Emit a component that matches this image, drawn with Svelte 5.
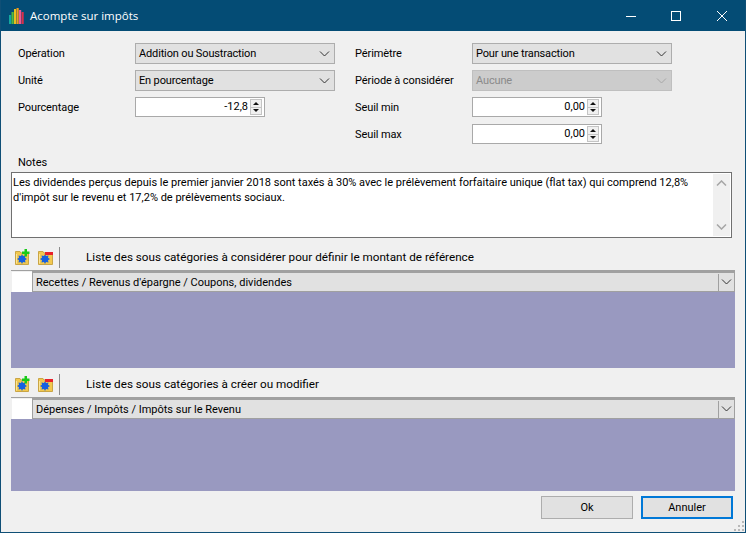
<script>
  const bars = [
    { x: 0, y: 7, h: 9, c: '#12a8a0' },
    { x: 2.5, y: 4, h: 12, c: '#55b83a' },
    { x: 5, y: 1, h: 15, c: '#e8c020' },
    { x: 7.5, y: 0, h: 16, c: '#f09a1c' },
    { x: 10, y: 2, h: 14, c: '#e85a9a' },
    { x: 12.5, y: 4, h: 12, c: '#d9304a' }
  ];

  const sections = [
    { label: 'Liste des sous catégories à considérer pour définir le montant de référence', value: "Recettes / Revenus d'épargne / Coupons, dividendes", grid: 'tall' },
    { label: 'Liste des sous catégories à créer ou modifier', value: 'Dépenses / Impôts / Impôts sur le Revenu', grid: 'short' }
  ];
</script>

{#snippet chevron()}
  <svg class="chevron" width="11" height="6" viewBox="0 0 11 6"><path d="M1 0.5 L5.5 5 L10 0.5" fill="none" stroke="currentColor" stroke-width="1" /></svg>
{/snippet}

{#snippet combo(text, disabled = false)}
  <div class="combo" class:disabled>
    <span>{text}</span>
    {@render chevron()}
  </div>
{/snippet}

{#snippet spin(text)}
  <div class="spin">
    <span class="spin-value">{text}</span>
    <div class="spin-btns">
      <div class="spin-btn"><svg width="6" height="3" viewBox="0 0 6 3"><path d="M3 0 L6 3 H0 Z" fill="#111" /></svg></div>
      <div class="spin-btn"><svg width="6" height="3" viewBox="0 0 6 3"><path d="M0 0 H6 L3 3 Z" fill="#111" /></svg></div>
    </div>
  </div>
{/snippet}

{#snippet folder(kind)}
  <svg width="17" height="17" viewBox="0 0 17 17">
    {#if kind === 'add'}
      <path d="M1.500 2.500 H6 L7 4 H14.500 V15.500 H1.500 Z" fill="#f2c84f" stroke="#c9a545" stroke-width="1" />
      <path d="M2.500 5 V14.500" stroke="#fbe59a" stroke-width="1" />
      <path d="M8 5 L9 7 L11.500 6.500 L11 8.800 L13 10 L11 11.200 L11.500 13.500 L9 13 L8 15 L7 13 L4.500 13.500 L5 11.200 L3 10 L5 8.800 L4.500 6.500 L7 7 Z" fill="#1560e0" />
      <path d="M8 2.500 H10.500 V0 H13 V2.500 H15.500 V5 H13 V7.500 H10.500 V5 H8 Z" fill="#18c918" />
    {:else}
      <path d="M2.500 2.500 H7 L8 4 H16.500 V15.500 H2.500 Z" fill="#f2c84f" stroke="#c9a545" stroke-width="1" />
      <path d="M3.500 5 V14.500" stroke="#fbe59a" stroke-width="1" />
      <path d="M9 5 L10 7 L12.500 6.500 L12 8.800 L14 10 L12 11.200 L12.500 13.500 L10 13 L9 15 L8 13 L5.500 13.500 L6 11.200 L4 10 L6 8.800 L5.500 6.500 L8 7 Z" fill="#1560e0" />
      <rect x="9" y="3" width="8" height="3" fill="#e8202a" />
    {/if}
  </svg>
{/snippet}

<div class="window">
  <header class="titlebar">
    <svg class="app-icon" width="16" height="16" viewBox="0 0 16 16">
      {#each bars as b}
        <rect x={b.x} y={b.y} width="2.2" height={b.h} fill={b.c} />
      {/each}
    </svg>
    <span class="title">Acompte sur impôts</span>
    <div class="controls">
      <div class="ctl"><svg class="min" width="10" height="10" viewBox="0 0 10 10"><path d="M0 5.500 H10" stroke="#fff" /></svg></div>
      <div class="ctl"><svg width="10" height="10" viewBox="0 0 10 10"><rect x="0.500" y="0.500" width="9" height="9" fill="none" stroke="#fff" /></svg></div>
      <div class="ctl"><svg width="10" height="10" viewBox="0 0 10 10"><path d="M0 0 L10 10 M10 0 L0 10" stroke="#fff" /></svg></div>
    </div>
  </header>

  <main class="body">
    <div class="form">
      <label>Opération</label>
      {@render combo('Addition ou Soustraction')}
      <label>Périmètre</label>
      {@render combo('Pour une transaction')}

      <label>Unité</label>
      {@render combo('En pourcentage')}
      <label>Période à considérer</label>
      {@render combo('Aucune', true)}

      <label>Pourcentage</label>
      {@render spin('-12,8')}
      <label>Seuil min</label>
      {@render spin('0,00')}

      <span></span>
      <span></span>
      <label>Seuil max</label>
      {@render spin('0,00')}
    </div>

    <div class="notes-label">Notes</div>
    <div class="notes">
      <p>Les dividendes perçus depuis le premier janvier 2018 sont taxés à 30% avec le prélèvement forfaitaire unique (flat tax) qui comprend 12,8% d'impôt sur le revenu et 17,2% de prélèvements sociaux.</p>
      <div class="scrollbar">
        <svg width="11" height="6" viewBox="0 0 11 6"><path d="M1 5.500 L5.500 1 L10 5.500" fill="none" stroke="#a6a6a6" stroke-width="1.500" /></svg>
        <svg width="11" height="6" viewBox="0 0 11 6"><path d="M1 0.500 L5.500 5 L10 0.500" fill="none" stroke="#a6a6a6" stroke-width="1.500" /></svg>
      </div>
    </div>

    {#each sections as s}
      <section class="section">
        <div class="toolbar">
          {@render folder('add')}
          {@render folder('del')}
          <div class="sep"></div>
          <span class="tool-label">{s.label}</span>
        </div>
        <div class="grid {s.grid}">
          <div class="row">
            <div class="row-head"></div>
            <div class="row-combo">
              <span>{s.value}</span>
              <div class="row-arrow">{@render chevron()}</div>
            </div>
          </div>
        </div>
      </section>
    {/each}

    <footer class="actions">
      <div class="btn">Ok</div>
      <div class="btn default">Annuler</div>
    </footer>

    <svg class="grip" width="11" height="11" viewBox="0 0 11 11">
      <g fill="#b8b8b8">
        <rect x="8" y="0" width="2" height="2" />
        <rect x="4" y="4" width="2" height="2" />
        <rect x="8" y="4" width="2" height="2" />
        <rect x="0" y="8" width="2" height="2" />
        <rect x="4" y="8" width="2" height="2" />
        <rect x="8" y="8" width="2" height="2" />
      </g>
    </svg>
  </main>
</div>

<style>
  :global(body) {
    margin: 0;
    background: #f0f0f0;
  }

  .window {
    width: 746px;
    height: 533px;
    box-sizing: border-box;
    display: flex;
    flex-direction: column;
    border: 1px solid #0f4f76;
    border-top: 0;
    background: #f0f0f0;
    font-family: Roboto, "Liberation Sans", sans-serif;
    font-size: 11px;
    color: #000;
    overflow: hidden;
  }

  .titlebar {
    height: 31px;
    flex: none;
    display: flex;
    align-items: center;
    background: #044c75;
    color: #fff;
    padding-left: 8px;
  }

  .app-icon {
    margin-right: 5px;
  }

  .title {
    font-family: "Open Sans", sans-serif;
    font-size: 11.5px;
  }

  .controls {
    margin-left: auto;
    display: flex;
  }

  .ctl {
    width: 46px;
    height: 30px;
    display: flex;
    align-items: center;
    justify-content: center;
  }

  .min {
    margin-left: 2px;
  }

  .body {
    position: relative;
    flex: 1;
    padding: 12px 0 0 10px;
  }

  .form {
    display: grid;
    grid-template-columns: 117px 220px 117px 200px;
    grid-auto-rows: 21px;
    row-gap: 6px;
    padding-left: 7px;
  }

  label {
    line-height: 21px;
    letter-spacing: -0.1px;
  }

  .combo {
    width: 200px;
    height: 21px;
    box-sizing: border-box;
    display: flex;
    align-items: center;
    justify-content: space-between;
    padding: 0 4px 0 3px;
    background: #e1e1e1;
    border: 1px solid #adadad;
    color: #000;
    letter-spacing: -0.15px;
  }

  .combo .chevron {
    color: #333;
  }

  .combo.disabled {
    background: #cccccc;
    border-color: #bfbfbf;
    color: #8a8a8a;
  }

  .combo.disabled .chevron {
    color: #a6a6a6;
  }

  .spin {
    width: 130px;
    height: 20px;
    box-sizing: border-box;
    display: flex;
    background: #fff;
    border: 1px solid #a9a9a9;
  }

  .spin-value {
    flex: 1;
    text-align: right;
    line-height: 18px;
    padding-right: 1px;
  }

  .spin-btns {
    width: 15px;
    box-sizing: border-box;
    display: flex;
    flex-direction: column;
    padding: 1px 2px 1px 1px;
  }

  .spin-btn {
    flex: 1;
    background: #f0f0f0;
    border: 1px solid #c4c4c4;
    display: flex;
    align-items: center;
    justify-content: center;
    box-sizing: border-box;
  }

  .spin-btn + .spin-btn {
    border-top: 0;
  }

  .notes-label {
    margin: 10px 0 0 7px;
    line-height: 15px;
    height: 15px;
  }

  .notes {
    width: 721px;
    height: 66px;
    box-sizing: border-box;
    margin-top: 2px;
    display: flex;
    background: #fff;
    border: 1px solid #707070;
    padding: 1px;
  }

  .notes p {
    flex: 1;
    margin: 0;
    padding: 1px 0;
    line-height: 15px;
  }

  .scrollbar {
    width: 17px;
    flex: none;
    background: #f0f0f0;
    display: flex;
    flex-direction: column;
    justify-content: space-between;
    align-items: center;
    padding: 6px 0;
    box-sizing: border-box;
  }

  .section {
    width: 724px;
  }

  .toolbar {
    height: 25px;
    display: flex;
    align-items: center;
    padding-left: 3px;
    gap: 5px;
    margin-top: 7px;
  }

  .section + .section .toolbar {
    margin-top: 4px;
  }

  .sep {
    width: 1px;
    height: 21px;
    background: #8c8c8c;
    margin-left: 1px;
  }

  .tool-label {
    margin-left: 21px;
    margin-bottom: 2px;
    font-size: 11.7px;
  }

  .grid {
    background: #9999c0;
    border-top: 1px solid #a0a0a0;
  }

  .grid.tall {
    height: 97px;
  }

  .grid.short {
    height: 93px;
  }

  .row {
    display: flex;
    height: 21px;
    background: #f0f0f0;
  }

  .row-head {
    width: 20px;
    height: 20px;
    background: #fff;
    margin: 1px 0 0 1px;
  }

  .row-combo {
    flex: 1;
    display: flex;
    align-items: center;
    justify-content: space-between;
    background: #e1e1e1;
    border: 1px solid #a0a0a0;
    border-top-width: 2px;
    box-sizing: border-box;
    padding-left: 3px;
  }

  .row-arrow {
    width: 15px;
    height: 17px;
    border-left: 1px solid #a0a0a0;
    display: flex;
    align-items: center;
    justify-content: center;
    color: #333;
  }

  .actions {
    display: flex;
    gap: 8px;
    justify-content: flex-end;
    margin-top: 5px;
    width: 722px;
  }

  .btn {
    width: 92px;
    height: 23px;
    box-sizing: border-box;
    display: flex;
    align-items: center;
    justify-content: center;
    background: #e1e1e1;
    border: 1px solid #adadad;
  }

  .btn.default {
    border: 2px solid #0078d7;
  }

  .grip {
    position: absolute;
    right: 0;
    bottom: 0;
  }
</style>
